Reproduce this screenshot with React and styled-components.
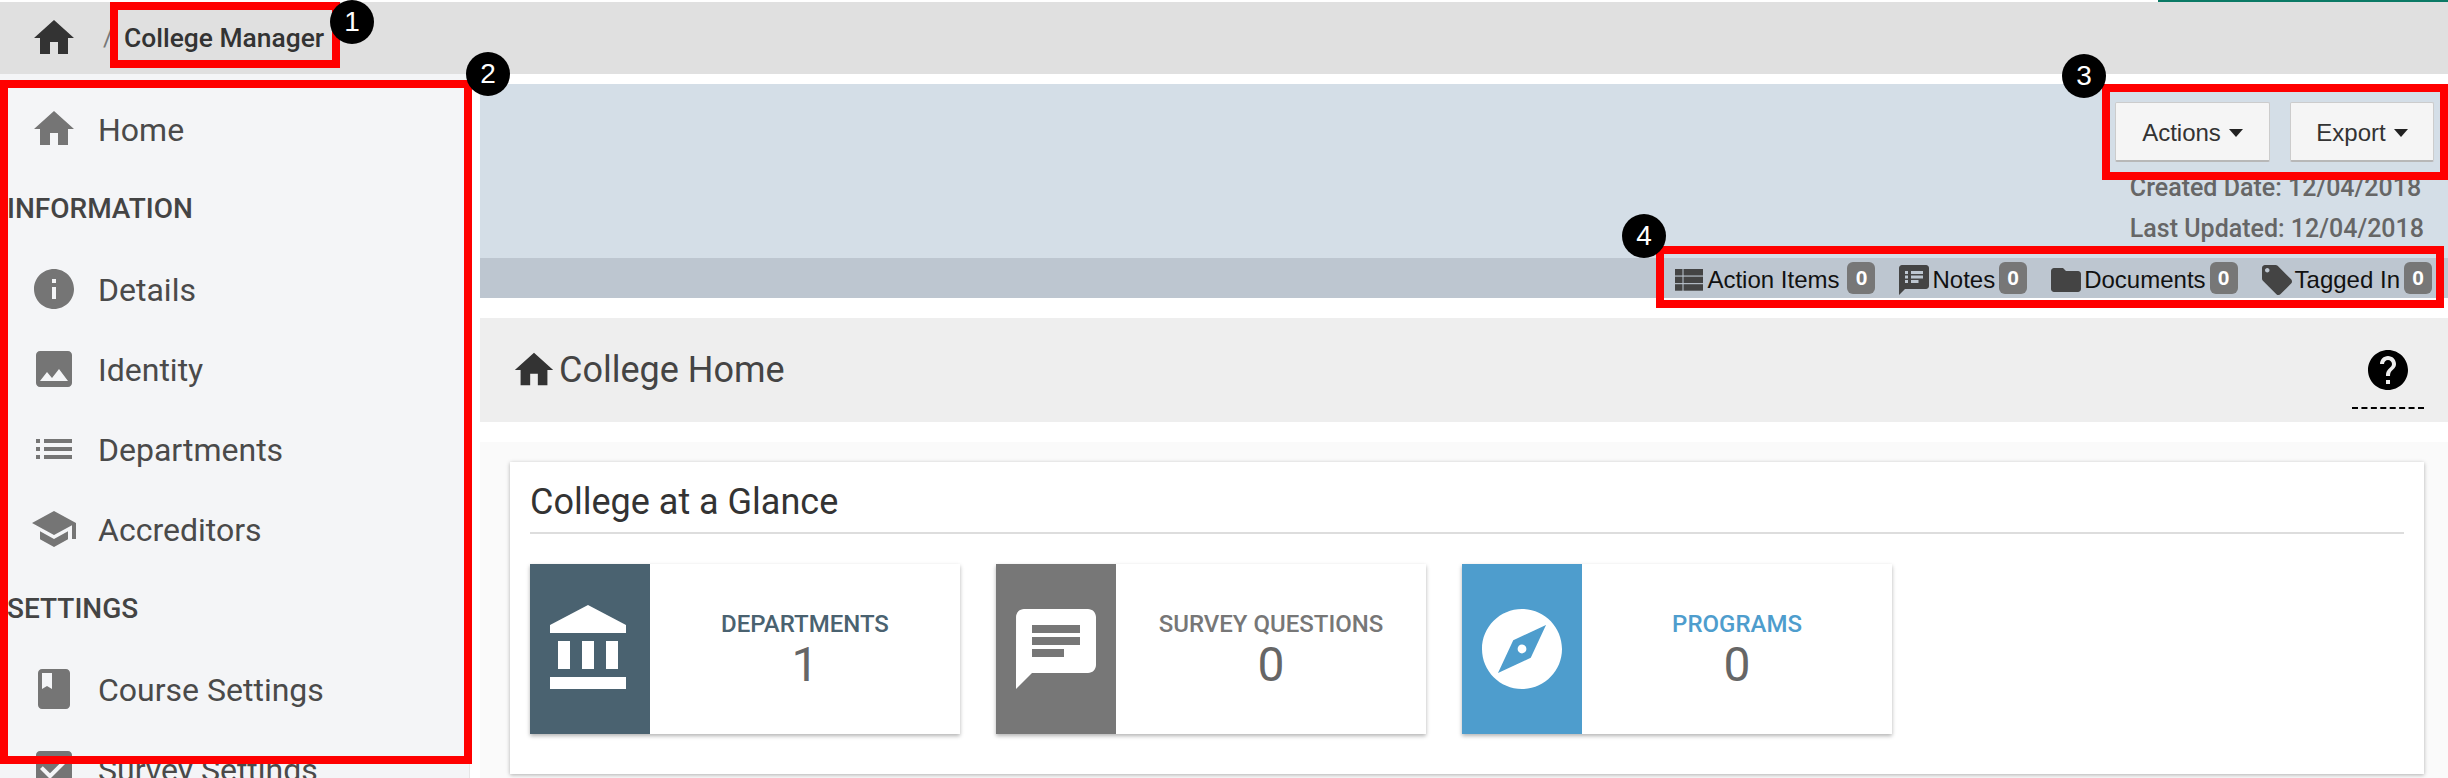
import React from 'react'
import styled, { createGlobalStyle } from 'styled-components'

const GlobalStyle = createGlobalStyle`
  html, body { margin: 0; padding: 0; background: #fff; }
  body { font-family: Roboto, "Liberation Sans", sans-serif; color: #444; }
`

// material icon paths
const paths = {
  home: 'M10 20v-6h4v6h5v-8h3L12 3 2 12h3v8z',
  info: 'M12 2C6.48 2 2 6.48 2 12s4.48 10 10 10 10-4.48 10-10S17.52 2 12 2zm1 15h-2v-6h2v6zm0-8h-2V7h2v2z',
  image: 'M21 19V5c0-1.1-.9-2-2-2H5c-1.1 0-2 .9-2 2v14c0 1.1.9 2 2 2h14c1.1 0 2-.9 2-2zM8.5 13.5l2.5 3.01L14.5 12l4.5 6H5l3.5-4.5z',
  list: 'M3 13h2v-2H3v2zm0 4h2v-2H3v2zm0-8h2V7H3v2zm4 4h14v-2H7v2zm0 4h14v-2H7v2zM7 7v2h14V7H7z',
  school: 'M5 13.18v4L12 21l7-3.82v-4L12 17l-7-3.82zM12 3L1 9l11 6 9-4.91V17h2V9L12 3z',
  book: 'M18 2H6c-1.1 0-2 .9-2 2v16c0 1.1.9 2 2 2h12c1.1 0 2-.9 2-2V4c0-1.1-.9-2-2-2zM6 4h5v8l-2.5-1.5L6 12V4z',
  checkBox: 'M19 3H5c-1.11 0-2 .9-2 2v14c0 1.1.89 2 2 2h14c1.11 0 2-.9 2-2V5c0-1.1-.89-2-2-2zm-9 14l-5-5 1.41-1.41L10 14.17l7.59-7.59L19 8l-9 9z',
  bank: 'M4 10v7h3v-7H4zm6 0v7h3v-7h-3zM2 22h19v-3H2v3zm14-12v7h3v-7h-3zm-4.5-9L2 6v2h19V6l-9.5-5z',
  chat: 'M20 2H4c-1.1 0-1.99.9-1.99 2L2 22l4-4h14c1.1 0 2-.9 2-2V4c0-1.1-.9-2-2-2zM6 9h12v2H6V9zm8 5H6v-2h8v2zm4-6H6V6h12v2z',
  explore: 'M12 10.9c-.61 0-1.1.49-1.1 1.1s.49 1.1 1.1 1.1c.61 0 1.1-.49 1.1-1.1s-.49-1.1-1.1-1.1zM12 2C6.48 2 2 6.48 2 12s4.48 10 10 10 10-4.48 10-10S17.52 2 12 2zm2.19 12.19L6 18l3.81-8.19L18 6l-3.81 8.19z',
  notes: 'M20 2H4c-1.1 0-1.99.9-1.99 2L2 22l4-4h14c1.1 0 2-.9 2-2V4c0-1.1-.9-2-2-2zM8 14H6v-2h2v2zm0-3H6V9h2v2zm0-3H6V6h2v2zm7 6h-5v-2h5v2zm3-3h-8V9h8v2zm0-3h-8V6h8v2z',
  folder: 'M10 4H4c-1.1 0-1.99.9-1.99 2L2 18c0 1.1.9 2 2 2h16c1.1 0 2-.9 2-2V8c0-1.1-.9-2-2-2h-8l-2-2z',
  tag: 'M21.41 11.58l-9-9C12.05 2.22 11.55 2 11 2H4c-1.1 0-2 .9-2 2v7c0 .55.22 1.05.59 1.42l9 9c.36.36.86.58 1.41.58.55 0 1.05-.22 1.41-.59l7-7c.37-.36.59-.86.59-1.41 0-.55-.23-1.06-.59-1.42zM5.5 7C4.67 7 4 6.33 4 5.5S4.67 4 5.5 4 7 4.67 7 5.5 6.33 7 5.5 7z',
  help: 'M12 2C6.48 2 2 6.48 2 12s4.48 10 10 10 10-4.48 10-10S17.52 2 12 2zm1 17h-2v-2h2v2zm2.07-7.75l-.9.92C13.45 12.9 13 13.5 13 15h-2v-.5c0-1.1.45-2.1 1.17-2.83l1.24-1.26c.37-.36.59-.86.59-1.41 0-1.1-.9-2-2-2s-2 .9-2 2H8c0-2.21 1.79-4 4-4s4 1.79 4 4c0 .88-.36 1.68-.93 2.25z',
}

const Svg = styled.svg`
  display: block;
  flex: none;
  width: ${p => p.$size}px;
  height: ${p => p.$size}px;
  fill: ${p => p.$color};
`

const Icon = ({ name, size = 48, color = '#333' }) => (
  <Svg viewBox="0 0 24 24" $size={size} $color={color}><path d={paths[name]} /></Svg>
)

const TableIconSvg = styled.svg`
  display: block;
  flex: none;
  width: 28px;
  height: 22px;
  fill: #444;
`

const TableIcon = () => (
  <TableIconSvg viewBox="0 0 28 22">
    <rect x="0" y="0" width="7.5" height="6.5" />
    <rect x="0" y="7.6" width="7.5" height="6.5" />
    <rect x="0" y="15.2" width="7.5" height="6.5" />
    <rect x="8.5" y="0" width="19.5" height="6.5" />
    <rect x="8.5" y="7.6" width="19.5" height="6.5" />
    <rect x="8.5" y="15.2" width="19.5" height="6.5" />
  </TableIconSvg>
)

const Page = styled.div`
  position: relative;
  height: 778px;
  overflow: hidden;
  display: flex;
  flex-direction: column;
`

const GreenLine = styled.div`
  height: 2px;
  margin-left: 2158px;
  background: #0b7a66;
  flex: none;
`

const TopBar = styled.div`
  height: 72px;
  flex: none;
  background: #e0e0e0;
  display: flex;
  align-items: center;
  padding-left: 30px;
  box-sizing: border-box;
`

const Slash = styled.span`
  font-size: 24px;
  color: #777;
  margin-left: 25px;
  width: 21px;
`

const Crumb = styled.span`
  font-size: 26.4px;
  font-weight: 500;
  color: #333;
`

const Body = styled.div`
  flex: 1;
  display: flex;
  min-height: 0;
`

const Sidebar = styled.nav`
  width: 470px;
  flex: none;
  box-sizing: border-box;
  background: #f4f5f7;
  border-right: 1px solid #e6e6e6;
  padding-top: 16px;
`

const NavRow = styled.div`
  height: 80px;
  display: flex;
  align-items: center;
  gap: 20px;
  padding-left: 30px;
  font-size: 32px;
  color: #4a4a4a;

  svg {
    margin-top: -2px;
  }
`

const NavHeading = styled.div`
  height: 80px;
  box-sizing: border-box;
  padding: 0 0 3px 7px;
  display: flex;
  align-items: center;
  font-size: 28px;
  font-weight: 500;
  color: #444;
`

const Main = styled.main`
  flex: 1;
  margin-left: 10px;
  min-width: 0;
  display: flex;
  flex-direction: column;
`

const Header = styled.header`
  margin-top: 10px;
  height: 174px;
  flex: none;
  background: #d4dee7;
  display: flex;
  flex-direction: column;
  align-items: flex-end;
  padding: 18px 14px 0 0;
  box-sizing: border-box;
`

const Buttons = styled.div`
  display: flex;
  gap: 20px;
`

const Button = styled.button`
  width: ${p => p.$width}px;
  height: 60px;
  box-sizing: border-box;
  background: #f5f5f5;
  border: 1px solid #ccc;
  border-bottom: 2px solid #b8b8b8;
  border-radius: 2px;
  font-family: "Liberation Sans", sans-serif;
  font-size: 24px;
  color: #333;
  display: flex;
  align-items: center;
  justify-content: center;
  gap: 8px;
  padding: 2px 0 0;
`

const Caret = styled.span`
  width: 0;
  height: 0;
  border-left: 7.5px solid transparent;
  border-right: 7.5px solid transparent;
  border-top: 8px solid #222;
`

const Meta = styled.div`
  margin-top: 5px;
  margin-right: 10px;
  font-size: 25px;
  font-weight: 500;
  line-height: 41px;
  color: #666;
`

const Strip = styled.div`
  height: 40px;
  flex: none;
  background: #bdc6d0;
  display: flex;
  align-items: stretch;
  justify-content: flex-end;
  gap: 21px;
  padding-right: 16px;
`

const StripItem = styled.div`
  display: flex;
  align-items: center;
  box-sizing: border-box;
  padding-top: 4px;
  font-family: "Liberation Sans", sans-serif;
  font-size: 24px;
  color: #111;
  gap: ${p => p.$gap || 0}px;
`

const Count = styled.span`
  width: 28px;
  height: 32px;
  margin-left: 4px;
  margin-top: -4px;
  border-radius: 6px;
  background: #777;
  color: #fff;
  font-size: 21px;
  font-weight: 700;
  display: flex;
  align-items: center;
  justify-content: center;
`

const TitleBand = styled.div`
  margin-top: 20px;
  height: 104px;
  flex: none;
  background: #eee;
  display: flex;
  align-items: center;
  justify-content: space-between;
  padding-left: 31px;
  padding-right: 24px;
`

const BandTitle = styled.div`
  display: flex;
  align-items: center;
  gap: 2px;
  font-size: 36px;
  color: #444;
`

const HelpWrap = styled.div`
  width: 72px;
  height: 61px;
  align-self: flex-start;
  margin-top: 28px;
  display: flex;
  justify-content: center;
  border-bottom: 2px dashed #000;
`

const Section = styled.section`
  margin-top: 20px;
  flex: 1;
  background: #fafafa;
  padding: 20px 24px 0 30px;
`

const Panel = styled.div`
  height: 312px;
  box-sizing: border-box;
  background: #fff;
  box-shadow: 0 1px 4px rgba(0, 0, 0, 0.3);
  padding: 0 20px;
`

const PanelTitle = styled.h2`
  margin: 0;
  height: 72px;
  box-sizing: border-box;
  border-bottom: 2px solid #ddd;
  font-size: 36px;
  font-weight: 400;
  line-height: 80px;
  color: #333;
`

const Tiles = styled.div`
  display: flex;
  gap: 36px;
  margin-top: 30px;
`

const Tile = styled.div`
  width: 430px;
  height: 170px;
  display: flex;
  background: #fff;
  box-shadow: 0 2px 4px rgba(0, 0, 0, 0.3);
`

const TileIcon = styled.div`
  width: 120px;
  flex: none;
  background: ${p => p.$color};
  display: flex;
  align-items: center;
  justify-content: center;
`

const TileBody = styled.div`
  flex: 1;
  text-align: center;
  padding-top: 46px;
`

const TileLabel = styled.div`
  font-size: 24px;
  font-weight: 500;
  line-height: 28px;
  color: ${p => p.$color};
`

const TileValue = styled.div`
  font-size: 48px;
  line-height: 54px;
  color: #666;
`

// red callouts drawn over the screenshot
const Callout = styled.div`
  position: absolute;
  box-sizing: border-box;
  left: ${p => p.$x}px;
  top: ${p => p.$y}px;
  width: ${p => p.$w}px;
  height: ${p => p.$h}px;
  border: 8px solid #f00;
`

const Marker = styled.div`
  position: absolute;
  left: ${p => p.$x - 22}px;
  top: ${p => p.$y - 22}px;
  width: 44px;
  height: 44px;
  border-radius: 50%;
  background: #000;
  color: #fff;
  font-family: "Liberation Sans", sans-serif;
  font-size: 28px;
  display: flex;
  align-items: center;
  justify-content: center;
`

const navTop = [{ icon: 'home', label: 'Home' }]
const navInfo = [
  { icon: 'info', label: 'Details' },
  { icon: 'image', label: 'Identity' },
  { icon: 'list', label: 'Departments' },
  { icon: 'school', label: 'Accreditors' },
]
const navSettings = [
  { icon: 'book', label: 'Course Settings' },
  { icon: 'checkBox', label: 'Survey Settings' },
]

const tiles = [
  { icon: 'bank', label: 'DEPARTMENTS', value: 1, color: '#4a6270' },
  { icon: 'chat', label: 'SURVEY QUESTIONS', value: 0, color: '#777777' },
  { icon: 'explore', label: 'PROGRAMS', value: 0, color: '#4e9dcd' },
]

const NavLink = ({ icon, label }) => (
  <NavRow>
    <Icon name={icon} color="#757575" />
    <span>{label}</span>
  </NavRow>
)

export default function App() {
  return (
    <Page>
      <GlobalStyle />
      <GreenLine />
      <TopBar>
        <Icon name="home" />
        <Slash>/</Slash>
        <Crumb>College Manager</Crumb>
      </TopBar>
      <Body>
        <Sidebar>
          {navTop.map(n => <NavLink key={n.label} {...n} />)}
          <NavHeading>INFORMATION</NavHeading>
          {navInfo.map(n => <NavLink key={n.label} {...n} />)}
          <NavHeading>SETTINGS</NavHeading>
          {navSettings.map(n => <NavLink key={n.label} {...n} />)}
        </Sidebar>
        <Main>
          <Header>
            <Buttons>
              <Button $width={155}>Actions <Caret /></Button>
              <Button $width={144}>Export <Caret /></Button>
            </Buttons>
            <Meta>
              <div>Created Date: 12/04/2018</div>
              <div>Last Updated: 12/04/2018</div>
            </Meta>
          </Header>
          <Strip>
            <StripItem $gap={4}><TableIcon />Action Items<Count>0</Count></StripItem>
            <StripItem><Icon name="notes" size={36} color="#444" />Notes<Count>0</Count></StripItem>
            <StripItem><Icon name="folder" size={36} color="#444" />Documents<Count>0</Count></StripItem>
            <StripItem><Icon name="tag" size={36} color="#444" />Tagged In<Count>0</Count></StripItem>
          </Strip>
          <TitleBand>
            <BandTitle><Icon name="home" size={46} />College Home</BandTitle>
            <HelpWrap><Icon name="help" size={48} color="#000" /></HelpWrap>
          </TitleBand>
          <Section>
            <Panel>
              <PanelTitle>College at a Glance</PanelTitle>
              <Tiles>
                {tiles.map(t => (
                  <Tile key={t.label}>
                    <TileIcon $color={t.color}><Icon name={t.icon} size={96} color="#fff" /></TileIcon>
                    <TileBody>
                      <TileLabel $color={t.color}>{t.label}</TileLabel>
                      <TileValue>{t.value}</TileValue>
                    </TileBody>
                  </Tile>
                ))}
              </Tiles>
            </Panel>
          </Section>
        </Main>
      </Body>
      <Callout $x={110} $y={2} $w={230} $h={66} />
      <Callout $x={0} $y={80} $w={472} $h={684} />
      <Callout $x={2102} $y={84} $w={346} $h={96} />
      <Callout $x={1656} $y={246} $w={788} $h={62} />
      <Marker $x={352} $y={22}>1</Marker>
      <Marker $x={488} $y={74}>2</Marker>
      <Marker $x={2084} $y={76}>3</Marker>
      <Marker $x={1644} $y={236}>4</Marker>
    </Page>
  )
}
